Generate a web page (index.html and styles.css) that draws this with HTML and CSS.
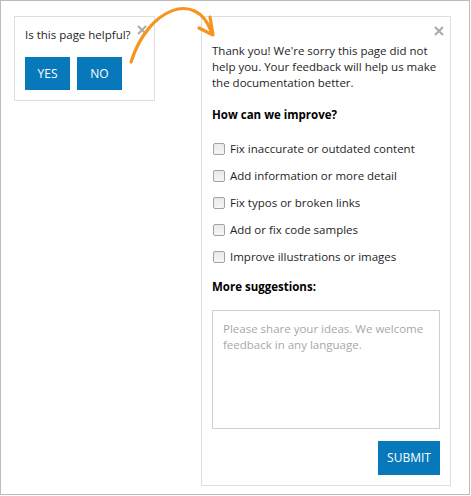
FILE: index.html
```html
<!DOCTYPE html>
<html lang="en">
<head>
<meta charset="utf-8">
<title>Feedback</title>
<link rel="stylesheet" href="styles.css">
</head>
<body>
<div class="frame">
  <div class="card ask">
    <svg class="close close-ask" width="10" height="10" viewBox="0 0 10 10"><path d="M1 1L9 9M9 1L1 9"/></svg>
    <p class="ask-title">Is this page helpful?</p>
    <div class="ask-buttons">
      <button class="btn btn-ask">YES</button>
      <button class="btn btn-ask">NO</button>
    </div>
  </div>
  <div class="card form">
    <svg class="close close-form" width="10" height="10" viewBox="0 0 10 10"><path d="M1 1L9 9M9 1L1 9"/></svg>
    <p class="thanks">Thank you! We're sorry this page did not help you. Your feedback will help us make the documentation better.</p>
    <h3 class="heading heading-improve">How can we improve?</h3>
    <ul class="options">
      <li class="option"><input type="checkbox" class="check"><span>Fix inaccurate or outdated content</span></li>
      <li class="option"><input type="checkbox" class="check"><span>Add information or more detail</span></li>
      <li class="option"><input type="checkbox" class="check"><span>Fix typos or broken links</span></li>
      <li class="option"><input type="checkbox" class="check"><span>Add or fix code samples</span></li>
      <li class="option"><input type="checkbox" class="check"><span>Improve illustrations or images</span></li>
    </ul>
    <h3 class="heading heading-more">More suggestions:</h3>
    <textarea class="ideas" placeholder="Please share your ideas. We welcome feedback in any language."></textarea>
    <div class="actions">
      <button class="btn btn-submit">SUBMIT</button>
    </div>
  </div>
  <svg class="arrow" width="470" height="495" viewBox="0 0 470 495">
    <path d="M131 62 C148 8, 196 -10, 211 31"/>
    <path d="M210 17 L213 35 L199 28"/>
  </svg>
</div>
</body>
</html>
```

FILE: styles.css
```css
html, body {
  margin: 0;
  padding: 0;
  background: #ffffff;
}

body {
  font-family: "Open Sans", "Noto Sans", sans-serif;
  font-size: 11.5px;
  line-height: 16px;
  color: #1e1e1e;
}

.frame {
  position: relative;
  box-sizing: border-box;
  width: 470px;
  height: 495px;
  border: 1px solid #bcbcbc;
  display: flex;
  align-items: flex-start;
  gap: 46px;
  padding: 15px 0 0 13px;
}

.card {
  position: relative;
  box-sizing: border-box;
  border: 1px solid #dfdfdf;
  background: #ffffff;
  padding: 10px;
}

.ask {
  width: 141px;
  height: 85px;
}

.form {
  width: 250px;
  height: 470px;
  display: flex;
  flex-direction: column;
}

.close {
  position: absolute;
  fill: none;
  stroke: #ababab;
  stroke-width: 2;
}

.close-ask {
  top: 8px;
  right: 7px;
}

.close-form {
  top: 9px;
  right: 6px;
}

.ask-title {
  margin: 0;
}

.ask-buttons {
  display: flex;
  gap: 7px;
  margin-top: 14px;
}

.btn {
  border: none;
  background: #0779bb;
  color: #ffffff;
  font-family: "Open Sans", "Noto Sans", sans-serif;
  font-size: 12px;
  line-height: 16px;
  padding: 0;
  cursor: pointer;
}

.btn-ask {
  width: 45px;
  height: 33px;
}

.thanks {
  margin: 16px 0 0;
}

.heading {
  margin: 0;
  font-size: 11.5px;
  line-height: 16px;
  font-weight: 700;
  color: #000000;
}

.heading-improve {
  margin-top: 16px;
}

.options {
  list-style: none;
  margin: 18px 0 0;
  padding: 0;
  display: flex;
  flex-direction: column;
  gap: 11px;
}

.option {
  display: flex;
  align-items: center;
  gap: 5px;
  height: 16px;
}

.check {
  appearance: none;
  -webkit-appearance: none;
  box-sizing: border-box;
  width: 12px;
  height: 12px;
  margin: 0 0 0 1px;
  border: 1px solid #a2a2a2;
  border-radius: 2px;
  background: linear-gradient(#e9e9e9, #f6f6f6);
}

.heading-more {
  margin-top: 14px;
}

.ideas {
  box-sizing: border-box;
  width: 100%;
  height: 119px;
  margin: 15px 0 0;
  padding: 10px 10px;
  border: 1px solid #cfcfcf;
  resize: none;
  font-family: "Open Sans", "Noto Sans", sans-serif;
  font-size: 11.5px;
  line-height: 16px;
  color: #1e1e1e;
}

.ideas::placeholder {
  color: #a8a8a8;
}

.actions {
  display: flex;
  justify-content: flex-end;
  margin-top: 12px;
}

.btn-submit {
  width: 62px;
  height: 34px;
}

.arrow {
  position: absolute;
  left: -1px;
  top: -1px;
  pointer-events: none;
  fill: none;
  stroke: #f7941d;
  stroke-width: 3.2;
  stroke-linecap: round;
  stroke-linejoin: round;
}
```
